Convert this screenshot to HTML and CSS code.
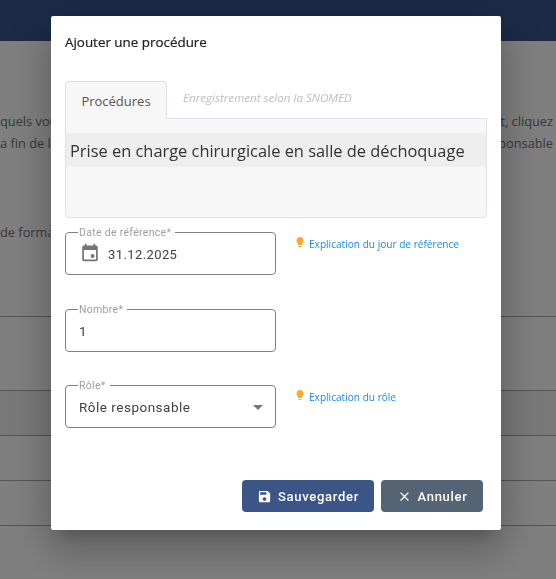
FILE: index.html
```html
<!DOCTYPE html>
<html lang="fr">
<head>
    <meta charset="UTF-8">
    <title>Ajouter une procédure</title>
    <link rel="stylesheet" href="styles.css">
</head>
<body>
<header class="top-bar"></header>

<main class="page">
    <div class="page-line first-line"><span>quels vous pouvez</span><span>ît, cliquez</span></div>
    <div class="page-line"><span>a fin de la</span><span>ponsable</span></div>
    <div class="page-line third-line"><span>de formation</span></div>
    <div class="page-table">
        <div class="page-row tall"></div>
        <div class="page-row shaded"></div>
        <div class="page-row"></div>
        <div class="page-row"></div>
        <div class="page-row"></div>
    </div>
</main>

<div class="backdrop"></div>

<section class="dialog">
    <h2 class="dialog-title">Ajouter une procédure</h2>

    <div class="tabs-wrapper">
        <div class="tab-link active">Procédures</div>
        <div class="tab-hint">Enregistrement selon la SNOMED</div>
    </div>
    <div class="tab-panel">
        <div class="procedure-row">Prise en charge chirurgicale en salle de déchoquage</div>
    </div>

    <div class="form-row date-row">
        <fieldset class="field">
            <legend>Date de référence*</legend>
            <div class="field-value with-icon">
                <svg class="calendar-icon" viewBox="3 1 18 22"><path d="M19 4h-1V2h-2v2H8V2H6v2H5c-1.11 0-2 .9-2 2v14c0 1.1.89 2 2 2h14c1.1 0 2-.9 2-2V6c0-1.1-.9-2-2-2zm0 16H5V9h14v11zm-6-6h4v4h-4z"/></svg>
                <span>31.12.2025</span>
            </div>
        </fieldset>
        <a href="#" class="help-link">
            <svg class="bulb-icon" viewBox="0 0 24 24" width="12" height="12"><path d="M9 21c0 .55.45 1 1 1h4c.55 0 1-.45 1-1v-1H9v1zm3-19C8.14 2 5 5.14 5 9c0 2.38 1.19 4.47 3 5.74V17c0 .55.45 1 1 1h6c.55 0 1-.45 1-1v-2.26c1.81-1.27 3-3.36 3-5.74 0-3.86-3.14-7-7-7z"/></svg>
            Explication du jour de référence
        </a>
    </div>

    <div class="form-row number-row">
        <fieldset class="field">
            <legend>Nombre*</legend>
            <div class="field-value">1</div>
        </fieldset>
    </div>

    <div class="form-row role-row">
        <fieldset class="field">
            <legend>Rôle*</legend>
            <div class="field-value select-value">
                <span>Rôle responsable</span>
                <span class="select-arrow"></span>
            </div>
        </fieldset>
        <a href="#" class="help-link">
            <svg class="bulb-icon" viewBox="0 0 24 24" width="12" height="12"><path d="M9 21c0 .55.45 1 1 1h4c.55 0 1-.45 1-1v-1H9v1zm3-19C8.14 2 5 5.14 5 9c0 2.38 1.19 4.47 3 5.74V17c0 .55.45 1 1 1h6c.55 0 1-.45 1-1v-2.26c1.81-1.27 3-3.36 3-5.74 0-3.86-3.14-7-7-7z"/></svg>
            Explication du rôle
        </a>
    </div>

    <div class="dialog-actions">
        <button class="btn btn-save">
            <svg viewBox="0 0 24 24" width="15" height="15"><path d="M17 3H5c-1.11 0-2 .9-2 2v14c0 1.1.89 2 2 2h14c1.1 0 2-.9 2-2V7l-4-4zm-5 16c-1.66 0-3-1.34-3-3s1.34-3 3-3 3 1.34 3 3-1.34 3-3 3zm3-10H5V5h10v4z"/></svg>
            Sauvegarder
        </button>
        <button class="btn btn-cancel">
            <svg viewBox="0 0 24 24" width="15" height="15"><path d="M19 6.41 17.59 5 12 10.59 6.41 5 5 6.41 10.59 12 5 17.59 6.41 19 12 13.41 17.59 19 19 17.59 13.41 12z"/></svg>
            Annuler
        </button>
    </div>
</section>
</body>
</html>
```

FILE: styles.css
```css
/* Page behind the dialog */
html, body {
    height: 100%;
}

body {
    margin: 0;
    overflow: hidden;
    background-color: #fff;
    font-family: 'Roboto', sans-serif;
    color: #333;
}

.top-bar {
    height: 41px;
    background-color: #38548e;
}

.page {
    font-family: 'Open Sans', sans-serif;
    font-size: 12.8px;
    line-height: 22px;
    color: #707070;
}

.page-line {
    display: flex;
    justify-content: space-between;
    padding-right: 3px;
    white-space: nowrap;
}

.first-line {
    margin-top: 69px;
}

.third-line {
    margin-top: 67px;
}

.page-table {
    margin-top: 73px;
}

.page-row {
    height: 44px;
    border-top: 1px solid #aaa;
}

.page-row.tall {
    height: 73px;
}

.page-row.shaded {
    background-color: #f2f2f2;
}

.backdrop {
    position: fixed;
    inset: 0;
    background-color: rgba(0, 0, 0, 0.5);
}

/* Dialog */
.dialog {
    position: fixed;
    top: 16px;
    left: 51px;
    width: 450px;
    height: 514px;
    box-sizing: border-box;
    padding: 0 14px;
    background-color: #fff;
    border-radius: 2px;
    box-shadow: 0 11px 15px -7px rgba(0, 0, 0, 0.2), 0 24px 38px 3px rgba(0, 0, 0, 0.14), 0 9px 46px 8px rgba(0, 0, 0, 0.12);
}

.dialog-title {
    margin: 17px 0 0;
    font-family: 'Open Sans', sans-serif;
    font-size: 13.4px;
    font-weight: 400;
    line-height: 18px;
    color: #212121;
    -webkit-text-stroke: 0.2px #212121;
}

/* Tabs */
.tabs-wrapper {
    display: flex;
    margin-top: 30px;
    height: 37px;
}

.tab-link {
    width: 100px;
    height: 37px;
    margin-bottom: -1px;
    border: 1px solid #e0e0e8;
    border-bottom: none;
    border-radius: 4px 4px 0 0;
    background-color: #f7f7f7;
    font-family: 'Open Sans', sans-serif;
    font-size: 13px;
    line-height: 38px;
    text-align: center;
    color: #555;
    position: relative;
    z-index: 1;
}

.tab-hint {
    margin-left: 16px;
    font-family: 'Open Sans', sans-serif;
    font-size: 11.6px;
    font-style: italic;
    line-height: 34px;
    color: #bdbdbd;
}

.tab-panel {
    box-sizing: border-box;
    width: 422px;
    height: 100px;
    padding-top: 14px;
    background-color: #f7f7f7;
    border: 1px solid #e0e0e8;
    border-radius: 0 0 4px 4px;
}

.procedure-row {
    height: 34px;
    padding-left: 4px;
    background-color: #eee;
    font-family: 'Open Sans', sans-serif;
    font-size: 16.4px;
    line-height: 36px;
    color: #333;
    white-space: nowrap;
}

/* Form fields */
.form-row {
    display: flex;
    align-items: flex-start;
}

.date-row {
    margin-top: 9px;
}

.number-row {
    margin-top: 29px;
}

.role-row {
    margin-top: 28px;
}

.field {
    box-sizing: border-box;
    width: 211px;
    height: 48px;
    margin: 0;
    padding: 0 13px;
    border: 1px solid #808080;
    border-radius: 4px;
}

.field legend {
    margin-left: -1px;
    padding: 0 4px 0 1px;
    font-size: 10.5px;
    line-height: 11px;
    letter-spacing: 0.3px;
    color: #9e9e9e;
}

.field-value {
    display: flex;
    align-items: center;
    height: 30px;
    margin-top: 1px;
    font-size: 13.5px;
    letter-spacing: 0.5px;
    color: #424242;
}

.with-icon {
    font-size: 13px;
    letter-spacing: 0.4px;
    padding-left: 3px;
}

.calendar-icon {
    width: 16px;
    height: 19px;
    margin-right: 10px;
    margin-top: -3px;
    fill: #757575;
}

.select-value {
    justify-content: space-between;
}

.select-arrow {
    width: 0;
    height: 0;
    margin-right: -1px;
    border-left: 5px solid transparent;
    border-right: 5px solid transparent;
    border-top: 5px solid #757575;
}

.help-link {
    display: flex;
    align-items: center;
    margin: 10px 0 0 18px;
    font-family: 'Open Sans', sans-serif;
    font-size: 10.1px;
    line-height: 14px;
    color: #1e88e5;
    text-decoration: none;
    white-space: nowrap;
}

.bulb-icon {
    margin-right: 3px;
    margin-top: -4px;
    fill: #ffa726;
}

/* Buttons */
.dialog-actions {
    display: flex;
    justify-content: flex-end;
    gap: 7px;
    margin-top: 52px;
    padding-right: 4px;
}

.btn {
    display: flex;
    align-items: center;
    justify-content: center;
    gap: 6px;
    height: 32px;
    padding: 0;
    border: none;
    border-radius: 4px;
    font-family: 'Roboto', sans-serif;
    font-size: 13px;
    font-weight: 500;
    letter-spacing: 0.7px;
    color: #fff;
}

.btn svg {
    fill: #fff;
}

.btn-save {
    width: 132px;
    background-color: #3b5586;
}

.btn-cancel {
    width: 102px;
    background-color: #546474;
}
```
